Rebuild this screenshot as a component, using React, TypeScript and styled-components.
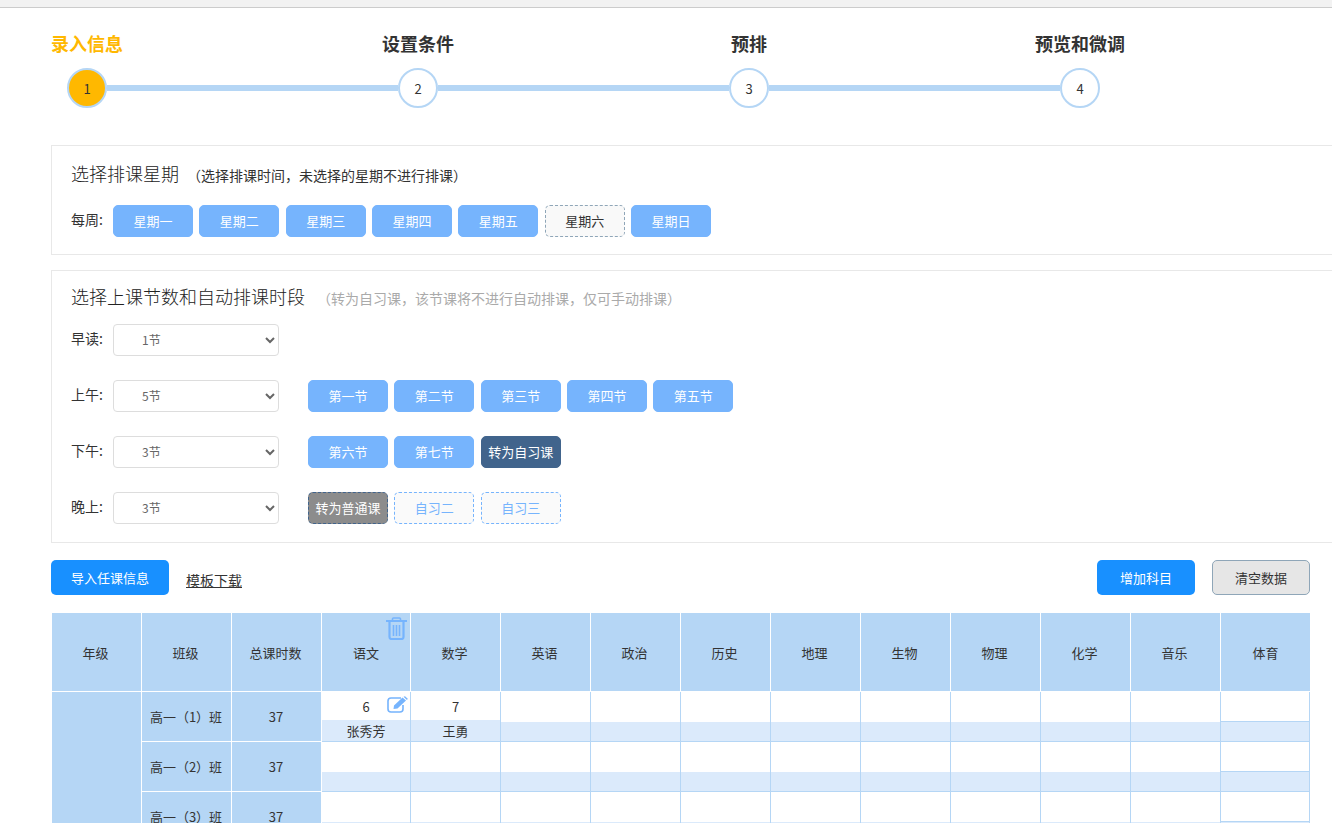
import React from "react";
import styled, { createGlobalStyle } from "styled-components";

const Global = createGlobalStyle`
  html, body { margin: 0; padding: 0; height: 823px; overflow: hidden; background: #fff; }
  body { font-family: "Noto Sans CJK SC", "Liberation Sans", sans-serif; color: #333; }
  * { box-sizing: border-box; }
`;

const TopBar = styled.div`
  height: 8px;
  background: #f2f2f2;
  border-bottom: 1px solid #ccc;
`;
const Page = styled.div`
  width: 1332px;
  overflow: hidden;
  padding: 22px 0 0 51px;
`;
const LabelRow = styled.div`
  display: flex;
  gap: 259px;
  height: 26px;
`;
const StepLabel = styled.div<{ $active?: boolean }>`
  width: 72px;
  display: flex;
  justify-content: center;
  white-space: nowrap;
  font-size: 18px;
  line-height: 26px;
  font-weight: 700;
  color: ${(p) => (p.$active ? "#ffb800" : "#333")};
`;
const Track = styled.div`
  display: flex;
  align-items: center;
  margin: 12px 0 37px 16px;
`;
const Circle = styled.div<{ $active?: boolean }>`
  width: 40px;
  height: 40px;
  border-radius: 50%;
  border: 2px solid #b5d6f5;
  background: ${(p) => (p.$active ? "#ffb800" : "#fff")};
  display: flex;
  align-items: center;
  justify-content: center;
  font-size: 13px;
  color: #333;
`;
const Line = styled.div`
  width: 291px;
  height: 6px;
  background: #b5d6f5;
`;
const Card = styled.section<{ $h: number }>`
  width: 1320px;
  height: ${(p) => p.$h}px;
  border: 1px solid #e8e8e8;
  padding: 0 19px;
  margin-bottom: 15px;
`;
const Title = styled.div<{ $top: number; $bottom: number }>`
  display: flex;
  align-items: baseline;
  padding-top: ${(p) => p.$top}px;
  margin-bottom: ${(p) => p.$bottom}px;
  height: ${(p) => p.$top + 26}px;
  font-size: 18px;
  line-height: 26px;
  font-weight: 300;
  color: #222;
`;
const Hint = styled.span<{ $muted?: boolean; $left: number }>`
  font-size: 14px;
  font-weight: 400;
  margin-left: ${(p) => p.$left}px;
  color: ${(p) => (p.$muted ? "#aaa" : "#333")};
`;
const FormRow = styled.div`
  display: flex;
  align-items: center;
  height: 32px;
  margin-bottom: 24px;
  &:last-child { margin-bottom: 0; }
`;
const RowLabel = styled.div`
  width: 42px;
  font-size: 14px;
  line-height: 20px;
  padding-bottom: 4px;
  color: #333;
`;
const Select = styled.select`
  width: 166px;
  height: 32px;
  border: 1px solid #ddd;
  border-radius: 4px;
  background: #fff;
  padding: 0 0 2px 24px;
  font-family: inherit;
  font-size: 12px;
  color: #666;
`;
const Buttons = styled.div<{ $indent?: boolean }>`
  display: flex;
  gap: 6.33px;
  margin-left: ${(p) => (p.$indent ? 29 : 0)}px;
`;
type Kind = "on" | "off" | "dark" | "gray" | "ghost";
const kinds: Record<Kind, string> = {
  on: "background:#76b4fd;color:#fff;border:1px solid #76b4fd;",
  off: "background:#f9f9f9;color:#333;border:1px dashed #8fa6b8;",
  dark: "background:#41648c;color:#fff;border:1px solid #41648c;",
  gray: "background:#8c8c8c;color:#fff;border:1px dashed #41648c;",
  ghost: "background:#fafafa;color:#76b4fd;border:1px dashed #76b4fd;",
};
const Chip = styled.div<{ $kind?: Kind }>`
  width: 80px;
  height: 32px;
  padding-bottom: 1px;
  border-radius: 5px;
  font-size: 13px;
  display: flex;
  align-items: center;
  justify-content: center;
  white-space: nowrap;
  ${(p) => kinds[p.$kind ?? "on"]}
`;
const ActionBar = styled.div`
  display: flex;
  align-items: center;
  width: 1259px;
  height: 35px;
  margin-top: 17px;
  margin-bottom: 18px;
`;
const Primary = styled.div<{ $w: number }>`
  width: ${(p) => p.$w}px;
  height: 35px;
  border-radius: 5px;
  background: #1890ff;
  color: #fff;
  font-size: 13px;
  display: flex;
  align-items: center;
  justify-content: center;
`;
const Clear = styled.div`
  width: 98px;
  height: 35px;
  margin-left: 17px;
  border-radius: 5px;
  background: #e6e6e6;
  border: 1px solid #8fa6b8;
  color: #333;
  font-size: 13px;
  display: flex;
  align-items: center;
  justify-content: center;
`;
const TemplateLink = styled.a`
  margin-left: 17px;
  margin-right: auto;
  font-size: 14px;
  color: #333;
  text-decoration: underline;
  padding-top: 5px;
`;
const Table = styled.div`
  margin-left: 1px;
  width: 1258px;
`;
const HeadRow = styled.div`
  display: flex;
  height: 79px;
`;
const HeadCell = styled.div<{ $w: number }>`
  position: relative;
  flex: none;
  width: ${(p) => p.$w}px;
  height: 78px;
  padding-right: ${(p) => (p.$w === 90 ? 2 : 0)}px;
  border-right: 1px solid #fff;
  background: #b5d6f5;
  font-size: 13px;
  display: flex;
  align-items: center;
  justify-content: center;
  &:last-child { border-right: 0; }
`;
const TrashSvg = styled.svg`
  position: absolute;
  top: 4px;
  right: 3px;
  width: 21px;
  height: 23px;
  color: #76b4fd;
`;
const Body = styled.div`
  display: flex;
`;
const GradeCell = styled.div`
  width: 90px;
  flex: none;
  background: #b5d6f5;
  border-right: 1px solid #fff;
`;
const Rows = styled.div`
  flex: 1;
`;
const Row = styled.div`
  display: flex;
  height: 50px;
`;
const SideCell = styled.div`
  width: 90px;
  height: 50px;
  flex: none;
  padding-right: 1px;
  background: #b5d6f5;
  border-right: 1px solid #fff;
  border-bottom: 1px solid #fff;
  font-size: 13px;
  display: flex;
  align-items: center;
  justify-content: center;
  white-space: nowrap;
`;
const DataCell = styled.div<{ $w: number }>`
  position: relative;
  width: ${(p) => p.$w}px;
  height: 50px;
  flex: none;
  display: flex;
  flex-direction: column;
  border-right: 1px solid #b5d6f5;
  border-bottom: 1px solid #b5d6f5;
`;
const Count = styled.div<{ $boxed?: boolean }>`
  height: 30px;
  font-size: 13px;
  display: flex;
  align-items: center;
  justify-content: center;
  background: #fff;
  ${(p) => (p.$boxed ? "border-bottom:1px solid #b5d6f5;" : "")}
`;
const Teacher = styled.div`
  flex: 1;
  background: #dbeafb;
  font-size: 13px;
  line-height: 21px;
  text-align: center;
`;
const EditSvg = styled.svg`
  position: absolute;
  top: 4px;
  right: 2px;
  width: 21px;
  height: 17px;
  color: #76b4fd;
`;

function Trash() {
  return (
    <TrashSvg viewBox="0 0 21 23" fill="none" stroke="currentColor">
      <path d="M6.5 3.5 V2 a1 1 0 0 1 1-1 h6 a1 1 0 0 1 1 1 V3.5" strokeWidth="1.6" />
      <path d="M0 4 H21" strokeWidth="2" />
      <path d="M3.5 4.5 V20 a2 2 0 0 0 2 2 h10 a2 2 0 0 0 2-2 V4.5" strokeWidth="2.2" />
      <path d="M7.5 8 V19 M10.5 8 V19 M13.5 8 V19" strokeWidth="1.6" />
    </TrashSvg>
  );
}
function Edit() {
  return (
    <EditSvg viewBox="0 0 21 17" fill="none">
      <path d="M14 2 H4 a3 3 0 0 0-3 3 v8 a3 3 0 0 0 3 3 h9 a3 3 0 0 0 3-3 V9" stroke="currentColor" strokeWidth="1.6" />
      <path d="M6.5 13 L7 9.5 L15.5 1.5 L19 4.5 L10.5 12.5 Z M16.5 0.7 L18 0.2 L20.8 2.8 L20 4 Z" fill="currentColor" />
    </EditSvg>
  );
}

const subjects = ["语文", "数学", "英语", "政治", "历史", "地理", "生物", "物理", "化学", "音乐", "体育"];
const subjectWidth = (i: number) => (i === 0 || i === subjects.length - 1 ? 89 : 90);
const rows = [
  { name: "高一（1）班", data: { 语文: ["6", "张秀芳"], 数学: ["7", "王勇"] } as Record<string, string[]> },
  { name: "高一（2）班", data: {} as Record<string, string[]> },
  { name: "高一（3）班", data: {} as Record<string, string[]> },
];
const steps = ["录入信息", "设置条件", "预排", "预览和微调"];
const week: [string, Kind][] = [
  ["星期一", "on"], ["星期二", "on"], ["星期三", "on"], ["星期四", "on"],
  ["星期五", "on"], ["星期六", "off"], ["星期日", "on"],
];

function Period({ label, value, items }: { label: string; value: string; items: [string, Kind][] }) {
  return (
    <FormRow>
      <RowLabel>{label}</RowLabel>
      <Select defaultValue={value}>
        {["1节", "2节", "3节", "4节", "5节"].map((o) => <option key={o}>{o}</option>)}
      </Select>
      {items.length > 0 && (
        <Buttons $indent>
          {items.map(([t, k]) => <Chip key={t} $kind={k}>{t}</Chip>)}
        </Buttons>
      )}
    </FormRow>
  );
}

export default function App() {
  return (
    <>
      <Global />
      <TopBar />
      <Page>
        <LabelRow>
          {steps.map((s, i) => <StepLabel key={s} $active={i === 0}>{s}</StepLabel>)}
        </LabelRow>
        <Track>
          {steps.map((s, i) => (
            <React.Fragment key={s}>
              <Circle $active={i === 0}>{i + 1}</Circle>
              {i < 3 && <Line />}
            </React.Fragment>
          ))}
        </Track>
        <Card $h={110}>
          <Title $top={14} $bottom={19}>
            选择排课星期<Hint $left={8}>（选择排课时间，未选择的星期不进行排课）</Hint>
          </Title>
          <FormRow>
            <RowLabel>每周:</RowLabel>
            <Buttons>
              {week.map(([t, k]) => <Chip key={t} $kind={k}>{t}</Chip>)}
            </Buttons>
          </FormRow>
        </Card>
        <Card $h={273}>
          <Title $top={12} $bottom={15}>
            选择上课节数和自动排课时段<Hint $muted $left={12}>（转为自习课，该节课将不进行自动排课，仅可手动排课）</Hint>
          </Title>
          <Period label="早读:" value="1节" items={[]} />
          <Period label="上午:" value="5节" items={[["第一节", "on"], ["第二节", "on"], ["第三节", "on"], ["第四节", "on"], ["第五节", "on"]]} />
          <Period label="下午:" value="3节" items={[["第六节", "on"], ["第七节", "on"], ["转为自习课", "dark"]]} />
          <Period label="晚上:" value="3节" items={[["转为普通课", "gray"], ["自习二", "ghost"], ["自习三", "ghost"]]} />
        </Card>
        <ActionBar>
          <Primary $w={118}>导入任课信息</Primary>
          <TemplateLink>模板下载</TemplateLink>
          <Primary $w={98}>增加科目</Primary>
          <Clear>清空数据</Clear>
        </ActionBar>
        <Table>
          <HeadRow>
            <HeadCell $w={90}>年级</HeadCell>
            <HeadCell $w={90}>班级</HeadCell>
            <HeadCell $w={90}>总课时数</HeadCell>
            {subjects.map((s, i) => (
              <HeadCell key={s} $w={subjectWidth(i)}>
                {s}
                {i === 0 && <Trash />}
              </HeadCell>
            ))}
          </HeadRow>
          <Body>
            <GradeCell />
            <Rows>
              {rows.map((r, ri) => (
                <Row key={r.name}>
                  <SideCell>{r.name}</SideCell>
                  <SideCell>37</SideCell>
                  {subjects.map((s, i) => (
                    <DataCell key={s} $w={subjectWidth(i)}>
                      <Count $boxed={i === subjects.length - 1}>{r.data[s]?.[0]}</Count>
                      <Teacher>{r.data[s]?.[1]}</Teacher>
                      {ri === 0 && i === 0 && <Edit />}
                    </DataCell>
                  ))}
                </Row>
              ))}
            </Rows>
          </Body>
        </Table>
      </Page>
    </>
  );
}
